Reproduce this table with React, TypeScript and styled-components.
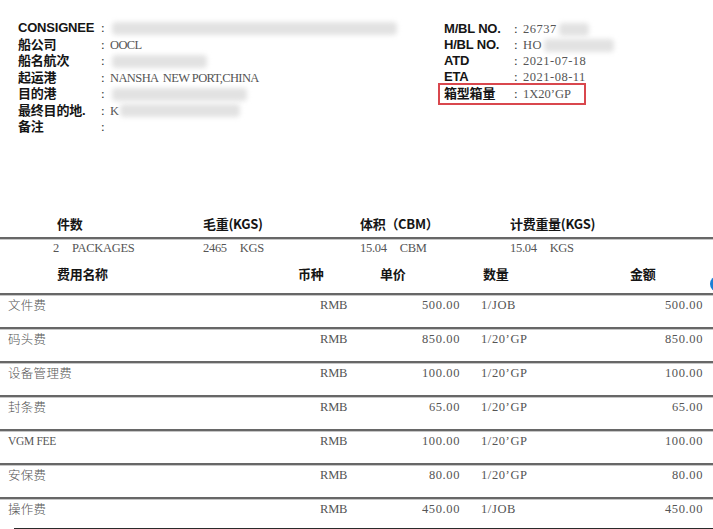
import styled, { createGlobalStyle } from "styled-components";

const GlobalStyle = createGlobalStyle`
  html, body {
    margin: 0;
    padding: 0;
    background: #fff;
    overflow: hidden;
  }
  body {
    font-family: "Noto Sans CJK SC", "Liberation Sans", sans-serif;
    color: #111;
  }
`;

const leftRows = [
  { label: "CONSIGNEE", value: "", smudge: 285 },
  { label: "船公司", value: "OOCL" },
  { label: "船名航次", value: "", smudge: 95 },
  { label: "起运港", value: "NANSHA  NEW PORT,CHINA" },
  { label: "目的港", value: "", smudge: 135 },
  { label: "最终目的地.", value: "K", smudge: 120 },
  { label: "备注", value: "" },
];

const rightRows = [
  { label: "M/BL NO.", value: "26737", smudge: 30 },
  { label: "H/BL NO.", value: "HO", smudge: 70 },
  { label: "ATD", value: "2021-07-18" },
  { label: "ETA", value: "2021-08-11" },
];

const summary = [
  { title: "件数", num: "2", unit: "PACKAGES" },
  { title: "毛重(KGS)", num: "2465", unit: "KGS" },
  { title: "体积（CBM）", num: "15.04", unit: "CBM" },
  { title: "计费重量(KGS)", num: "15.04", unit: "KGS" },
];

const fees = [
  { name: "文件费", price: "500.00", qty: "1/JOB", amount: "500.00" },
  { name: "码头费", price: "850.00", qty: "1/20’GP", amount: "850.00" },
  { name: "设备管理费", price: "100.00", qty: "1/20’GP", amount: "100.00" },
  { name: "封条费", price: "65.00", qty: "1/20’GP", amount: "65.00" },
  { name: "VGM FEE", price: "100.00", qty: "1/20’GP", amount: "100.00" },
  { name: "安保费", price: "80.00", qty: "1/20’GP", amount: "80.00" },
  { name: "操作费", price: "450.00", qty: "1/JOB", amount: "450.00" },
];

export default function App() {
  return (
    <>
      <GlobalStyle />
      <Page>
        <Top>
          <InfoBlock>
            {leftRows.map((r) => (
              <InfoRow key={r.label}>
                <Label $w={83}>{r.label}</Label>
                <Colon>:</Colon>
                <Value $spacing={-0.6}>
                  {r.value}
                  {r.smudge ? <Smudge $w={r.smudge} /> : null}
                </Value>
              </InfoRow>
            ))}
          </InfoBlock>
          <RightBlock>
            {rightRows.map((r) => (
              <InfoRow key={r.label} $h={16}>
                <Label $w={70}>{r.label}</Label>
                <Colon>:</Colon>
                <Value $spacing={0.5}>
                  {r.value}
                  {r.smudge ? <Smudge $w={r.smudge} /> : null}
                </Value>
              </InfoRow>
            ))}
            <BoxedRow>
              <Label $w={70}>箱型箱量</Label>
              <Colon>:</Colon>
              <Value $spacing={0}>1X20’GP</Value>
            </BoxedRow>
          </RightBlock>
        </Top>

        <SumHead>
          {summary.map((s, i) => (
            <HeadCell key={s.title} $pad={i === 0 ? 57 : 0}>
              {s.title}
            </HeadCell>
          ))}
        </SumHead>
        <SumValues>
          {summary.map((s, i) => (
            <ValCell key={s.title} $pad={i === 0 ? 53 : 0}>
              <span>{s.num}</span>
              <span>{s.unit}</span>
            </ValCell>
          ))}
        </SumValues>

        <FeeHead>
          <HeadCell $pad={57}>费用名称</HeadCell>
          <HeadCell $pad={38}>币种</HeadCell>
          <HeadCell $pad={30}>单价</HeadCell>
          <HeadCell $pad={21}>数量</HeadCell>
          <HeadCell $pad={70}>金额</HeadCell>
        </FeeHead>
        {fees.map((f) => (
          <FeeRow key={f.name}>
            <FeeName $latin={/^[A-Z ]+$/.test(f.name)}>{f.name}</FeeName>
            <Num $right={3} $spacing={-0.3}>RMB</Num>
            <Num $right={2}>{f.price}</Num>
            <Qty>{f.qty}</Qty>
            <Num $right={10}>{f.amount}</Num>
          </FeeRow>
        ))}
        <EndRule />
        <FloatDot />
      </Page>
    </>
  );
}

const Page = styled.div`
  position: relative;
  width: 713px;
  height: 529px;
  overflow: hidden;
`;

const Top = styled.div`
  display: flex;
  height: 196px;
  padding-top: 20px;
`;

const InfoBlock = styled.div`
  display: flex;
  flex-direction: column;
  width: 426px;
  padding-left: 18px;
`;

const RightBlock = styled.div`
  display: flex;
  flex-direction: column;
  margin-top: 1px;
`;

const InfoRow = styled.div<{ $h?: number }>`
  display: flex;
  align-items: center;
  height: ${(p) => p.$h ?? 16.5}px;
  font-size: 13px;
  white-space: pre;
`;

const BoxedRow = styled(InfoRow)`
  box-sizing: border-box;
  width: 148px;
  height: 22px;
  margin: -2px 0 0 -6px;
  padding: 1px 0 1px 4px;
  border: 2px solid #d9474d;
`;

const Label = styled.div<{ $w: number }>`
  width: ${(p) => p.$w}px;
  font-family: "Liberation Sans", "Noto Sans CJK SC", sans-serif;
  font-weight: 700;
  color: #151515;
  letter-spacing: -0.2px;
  line-height: 16px;
`;

const Colon = styled.div`
  width: 9px;
  font-family: "Liberation Serif", serif;
  color: #333;
  line-height: 16px;
`;

const Value = styled.div<{ $spacing: number }>`
  display: flex;
  align-items: center;
  font-family: "Liberation Serif", "Noto Sans CJK SC", serif;
  font-size: 12.5px;
  letter-spacing: ${(p) => p.$spacing}px;
  color: #555;
  line-height: 16px;
`;

const Smudge = styled.span<{ $w: number }>`
  display: inline-block;
  width: ${(p) => p.$w}px;
  height: 13px;
  margin-left: 2px;
  border-radius: 4px;
  background: #e2e2e2;
  filter: blur(2.5px);
`;

const SumHead = styled.div`
  display: grid;
  grid-template-columns: 203px 157px 150px 1fr;
  height: 21px;
  align-items: start;
`;

const HeadCell = styled.div<{ $pad: number }>`
  padding-left: ${(p) => p.$pad}px;
  font-size: 13px;
  font-weight: 700;
  line-height: 16px;
  color: #151515;
  letter-spacing: -0.3px;
`;

const Rule = `
  border-top: 2px solid #676767;
  box-shadow: inset 0 1px 0 #c6c6c6;
`;

const SumValues = styled.div`
  display: grid;
  grid-template-columns: 203px 157px 150px 1fr;
  height: 16px;
  padding-top: 1px;
  ${Rule}
`;

const ValCell = styled.div<{ $pad: number }>`
  display: flex;
  gap: 13px;
  padding-left: ${(p) => p.$pad}px;
  font-family: "Liberation Serif", serif;
  font-size: 12.5px;
  letter-spacing: -0.3px;
  line-height: 16px;
  color: #555;
`;

const FeeGrid = styled.div`
  display: grid;
  grid-template-columns: 260px 90px 112px 98px 1fr;
  align-items: start;
`;

const FeeHead = styled(FeeGrid)`
  height: 37px;
  box-sizing: border-box;
  padding-top: 10px;
`;

const FeeRow = styled(FeeGrid)`
  box-sizing: border-box;
  height: 34px;
  padding-top: 2px;
  ${Rule}
`;

const FeeName = styled.div<{ $latin: boolean }>`
  padding-left: 8px;
  font-family: ${(p) =>
    p.$latin ? `"Liberation Serif", serif` : `"Noto Sans CJK SC", sans-serif`};
  font-size: ${(p) => (p.$latin ? 11.5 : 12.5)}px;
  font-weight: 300;
  letter-spacing: ${(p) => (p.$latin ? -0.3 : 0.3)}px;
  line-height: 16px;
  color: #555;
`;

const Num = styled.div<{ $right: number; $spacing?: number }>`
  padding-right: ${(p) => p.$right}px;
  text-align: right;
  font-family: "Liberation Serif", serif;
  font-size: 12.5px;
  letter-spacing: ${(p) => p.$spacing ?? 0.6}px;
  line-height: 16px;
  color: #555;
`;

const Qty = styled(Num)`
  padding-left: 19px;
  text-align: left;
`;

const EndRule = styled.div`
  margin: -3px 0 0 14px;
  height: 0;
  border-top: 2px solid #2a2a2a;
`;

const FloatDot = styled.div`
  position: absolute;
  left: 710px;
  top: 276px;
  width: 16px;
  height: 16px;
  border-radius: 50%;
  background: #1b7fd6;
`;
